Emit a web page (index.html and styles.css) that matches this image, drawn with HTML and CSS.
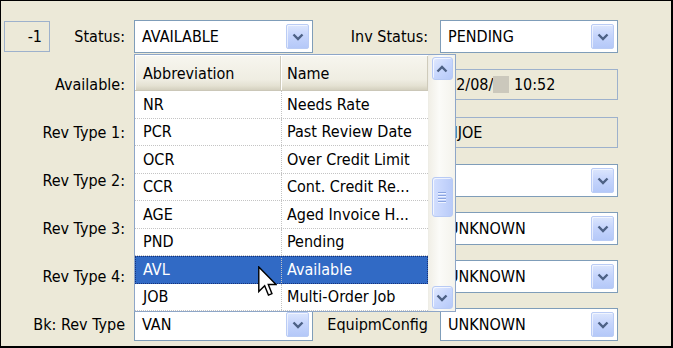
FILE: index.html
```html
<!DOCTYPE html>
<html lang="en">
<head>
  <meta charset="UTF-8">
  <title>Order Status</title>
  <link rel="stylesheet" href="styles.css">
</head>
<body>
  <div class="window">
    <div class="form">
      <div class="ro num">-1</div>
      <div class="lbl">Status:</div>
      <div class="combo"><span class="txt">AVAILABLE</span><span class="drop"><svg width="12" height="8" viewBox="0 0 12 8"><path d="M1.5 1.5 L6 6 L10.5 1.5" fill="none" stroke="#4D6185" stroke-width="2.4"/></svg></span></div>
      <div class="lbl right">Inv Status:</div>
      <div class="combo"><span class="txt">PENDING</span><span class="drop"><svg width="12" height="8" viewBox="0 0 12 8"><path d="M1.5 1.5 L6 6 L10.5 1.5" fill="none" stroke="#4D6185" stroke-width="2.4"/></svg></span></div>

      <div></div>
      <div class="lbl">Available:</div>
      <div class="ro"></div>
      <div class="lbl right"></div>
      <div class="ro">12/08/<span class="blur"></span> 10:52</div>

      <div></div>
      <div class="lbl">Rev Type 1:</div>
      <div class="combo"><span class="txt"></span></div>
      <div class="lbl right"></div>
      <div class="ro">NJOE</div>

      <div></div>
      <div class="lbl">Rev Type 2:</div>
      <div class="combo"><span class="txt"></span></div>
      <div class="lbl right"></div>
      <div class="combo"><span class="txt"></span><span class="drop"><svg width="12" height="8" viewBox="0 0 12 8"><path d="M1.5 1.5 L6 6 L10.5 1.5" fill="none" stroke="#4D6185" stroke-width="2.4"/></svg></span></div>

      <div></div>
      <div class="lbl">Rev Type 3:</div>
      <div class="combo"><span class="txt"></span></div>
      <div class="lbl right"></div>
      <div class="combo"><span class="txt">UNKNOWN</span><span class="drop"><svg width="12" height="8" viewBox="0 0 12 8"><path d="M1.5 1.5 L6 6 L10.5 1.5" fill="none" stroke="#4D6185" stroke-width="2.4"/></svg></span></div>

      <div></div>
      <div class="lbl">Rev Type 4:</div>
      <div class="combo"><span class="txt"></span></div>
      <div class="lbl right"></div>
      <div class="combo"><span class="txt">UNKNOWN</span><span class="drop"><svg width="12" height="8" viewBox="0 0 12 8"><path d="M1.5 1.5 L6 6 L10.5 1.5" fill="none" stroke="#4D6185" stroke-width="2.4"/></svg></span></div>

      <div></div>
      <div class="lbl">Bk: Rev Type</div>
      <div class="combo"><span class="txt">VAN</span><span class="drop"><svg width="12" height="8" viewBox="0 0 12 8"><path d="M1.5 1.5 L6 6 L10.5 1.5" fill="none" stroke="#4D6185" stroke-width="2.4"/></svg></span></div>
      <div class="lbl right">EquipmConfig</div>
      <div class="combo"><span class="txt">UNKNOWN</span><span class="drop"><svg width="12" height="8" viewBox="0 0 12 8"><path d="M1.5 1.5 L6 6 L10.5 1.5" fill="none" stroke="#4D6185" stroke-width="2.4"/></svg></span></div>
    </div>

    <div class="dropdown">
      <div class="cols">
        <div class="head">
          <div class="hcell">Abbreviation</div>
          <div class="hcell name">Name</div>
        </div>
        <div class="row"><div>NR</div><div>Needs Rate</div></div>
        <div class="row"><div>PCR</div><div>Past Review Date</div></div>
        <div class="row"><div>OCR</div><div>Over Credit Limit</div></div>
        <div class="row"><div>CCR</div><div>Cont. Credit Re...</div></div>
        <div class="row"><div>AGE</div><div>Aged Invoice H...</div></div>
        <div class="row"><div>PND</div><div>Pending</div></div>
        <div class="row selected"><div>AVL</div><div>Available</div></div>
        <div class="row"><div>JOB</div><div>Multi-Order Job</div></div>
      </div>
      <div class="vscroll">
        <div class="sbtn"><svg width="12" height="8" viewBox="0 0 12 8"><path d="M1.5 6.5 L6 2 L10.5 6.5" fill="none" stroke="#4D6185" stroke-width="2.4"/></svg></div>
        <div class="thumb"><span></span><span></span><span></span><span></span></div>
        <div class="sbtn down"><svg width="12" height="8" viewBox="0 0 12 8"><path d="M1.5 1.5 L6 6 L10.5 1.5" fill="none" stroke="#4D6185" stroke-width="2.4"/></svg></div>
      </div>
    </div>

    <svg class="cursor" width="19" height="32" viewBox="0 0 12 20">
      <path d="M0.5 0.5 L0.5 16 L4.2 12.4 L6.6 18.3 L8.8 17.4 L6.5 11.6 L11.4 11.6 Z" fill="#fff" stroke="#000" stroke-width="0.9" stroke-linejoin="miter"/>
    </svg>
  </div>
</body>
</html>
```

FILE: styles.css
```css
body {
  margin: 0;
  font-family: "DejaVu Sans Condensed", "DejaVu Sans", sans-serif;
  font-stretch: condensed;
  font-size: 16px;
  color: #000;
}
.window {
  position: relative;
  width: 673px;
  height: 348px;
  box-sizing: border-box;
  border: 1px solid #000;
  border-right-width: 2px;
  border-bottom-width: 2px;
  background-color: #ECE9D8;
  padding: 19px 0 0 3px;
  overflow: hidden;
}
.form {
  display: grid;
  grid-template-columns: 46px 84px 179px 127px 178px;
  grid-auto-rows: 33px;
  row-gap: 15px;
}
.lbl {
  display: flex;
  align-items: center;
  justify-content: flex-end;
  padding-right: 9px;
  white-space: nowrap;
}
.lbl.right {
  padding-right: 12px;
}
.combo {
  display: flex;
  align-items: stretch;
  border: 1px solid #7F9DB9;
  background: #fff;
}
.combo .txt {
  flex: 1;
  align-self: center;
  padding-left: 7px;
  white-space: nowrap;
  overflow: hidden;
}
.drop {
  width: 21px;
  margin: 3px 3px 3px 0;
  display: flex;
  align-items: center;
  justify-content: center;
  border: 1px solid #BACCF5;
  border-radius: 2px;
  background: linear-gradient(180deg, #DCE6FD 0%, #C6D5FC 45%, #B4C8F8 100%);
  box-shadow: inset 1px 1px 0 rgba(255,255,255,0.6);
}
.ro {
  align-self: center;
  height: 31px;
  box-sizing: border-box;
  border: 1px solid #9DB1CC;
  background-color: #ECE9D8;
  padding-left: 6px;
  line-height: 29px;
  white-space: nowrap;
  overflow: hidden;
}
.ro.num {
  text-align: right;
  padding: 0 7px 0 0;
}
.blur {
  display: inline-block;
  width: 16px;
  height: 17px;
  vertical-align: -3px;
  background-color: #CBC8BC;
  filter: blur(0.6px);
}

/* open list of the status combo */
.dropdown {
  position: absolute;
  left: 133px;
  top: 53px;
  width: 322px;
  height: 258px;
  box-sizing: border-box;
  border: 1px solid #8EA6C8;
  background: #fff;
  display: flex;
}
.cols {
  width: 293px;
}
.head {
  display: grid;
  grid-template-columns: 146px 147px;
  height: 36px;
}
.hcell {
  display: flex;
  align-items: center;
  padding-left: 8px;
  padding-top: 2px;
  background: linear-gradient(180deg, #F7F6EF 0%, #EFEDE2 70%, #E4E1D2 88%, #D4D0BF 100%);
  box-shadow: inset 1px 1px 0 #fff, inset -1px 0 0 #CFCBBB;
  border-bottom: 1px solid #CBC7B8;
}
.hcell.name {
  padding-left: 6px;
}
.row {
  display: grid;
  grid-template-columns: 146px 147px;
  height: 27.5px;
  box-sizing: border-box;
  border-bottom: 1px dotted #C4C4C4;
}
.row div {
  display: flex;
  align-items: center;
  padding-left: 8px;
  white-space: nowrap;
}
.row div + div {
  padding-left: 5px;
  border-left: 1px dotted #C4C4C4;
}
.row.selected {
  background-color: #316AC5;
  color: #fff;
  outline: 1px dotted #16337A;
  outline-offset: -1px;
}
.vscroll {
  width: 27px;
  display: flex;
  flex-direction: column;
  align-items: center;
  background: linear-gradient(90deg, #F1EFE7 0%, #FBFBF8 40%, #F4F3EC 100%);
  border-left: 1px solid #EEEDE6;
  box-sizing: border-box;
}
.sbtn {
  width: 21px;
  height: 23px;
  margin-top: 2px;
  box-sizing: border-box;
  display: flex;
  align-items: center;
  justify-content: center;
  border: 1px solid #B8CAF4;
  border-radius: 3px;
  background: linear-gradient(135deg, #E2EAFE 0%, #C8D7FD 50%, #B6C9F8 100%);
  box-shadow: inset 1px 1px 0 rgba(255,255,255,0.7);
}
.sbtn.down {
  margin-top: auto;
  margin-bottom: 2px;
}
.thumb {
  width: 21px;
  height: 40px;
  margin-top: 97px;
  box-sizing: border-box;
  display: flex;
  flex-direction: column;
  align-items: center;
  justify-content: center;
  gap: 2px;
  border: 1px solid #B8CAF4;
  border-radius: 3px;
  background: linear-gradient(90deg, #D3DFFE 0%, #C6D5FC 50%, #B9CBF8 100%);
  box-shadow: inset 1px 1px 0 rgba(255,255,255,0.7);
}
.thumb span {
  width: 8px;
  height: 1px;
  background-color: #8BA4E0;
  box-shadow: 0 1px 0 #EEF3FF;
}
.cursor {
  position: absolute;
  left: 257px;
  top: 265px;
}
```
